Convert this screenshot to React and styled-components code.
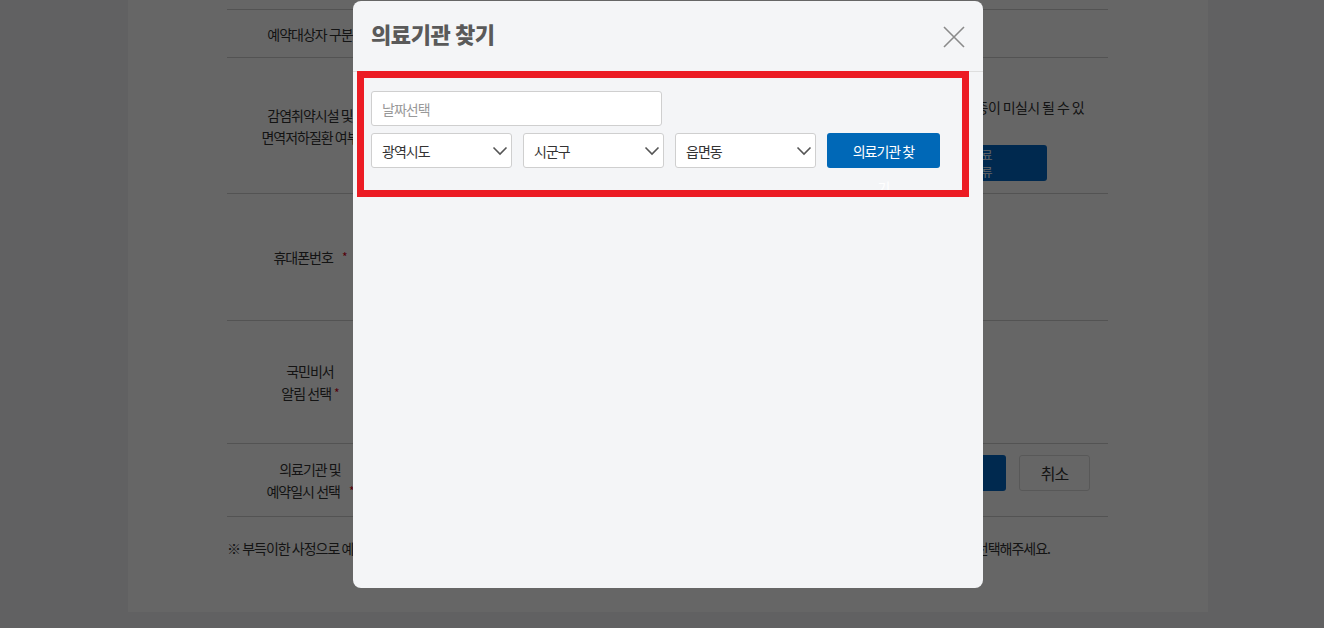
import React from "react";
import styled, { createGlobalStyle } from "styled-components";

const GlobalStyle = createGlobalStyle`
  html, body { margin: 0; padding: 0; }
  body {
    background: #f2f3f5;
    font-family: "Noto Sans CJK KR", "Noto Sans", "Liberation Sans", sans-serif;
    color: #333;
    overflow: hidden;
  }
  * { box-sizing: border-box; }
`;

const Page = styled.div`
  width: 1324px;
  height: 628px;
  background: #f2f3f5;
`;

const Content = styled.main`
  width: 1080px;
  height: 612px;
  margin-left: 128px;
  background: #fff;
  padding: 9px 100px 0 99px;
`;

const Table = styled.div`
  border-bottom: 1px solid #cfcfcf;
`;

const Row = styled.div`
  display: flex;
  height: ${(p) => p.$h}px;
  border-top: 1px solid #cfcfcf;
`;

const Label = styled.div`
  width: 166px;
  flex: none;
  display: flex;
  align-items: center;
  justify-content: center;
  text-align: center;
  font-size: 14px;
  letter-spacing: -1px;
  line-height: 22px;
  color: #333;
`;

const Req = styled.span`
  color: #d0021b;
  font-size: 12px;
  margin-left: ${(p) => (p.$wide ? 9 : 3)}px;
  vertical-align: top;
`;

const Value = styled.div`
  flex: 1;
  display: flex;
  flex-direction: column;
  align-items: flex-end;
  padding: ${(p) => p.$pt || 0}px ${(p) => p.$pr || 24}px 0 20px;
  gap: ${(p) => p.$gap || 0}px;
`;

const Notice = styled.p`
  margin: 0;
  font-size: 14px;
  letter-spacing: -0.6px;
  line-height: 22px;
  text-align: right;
  color: #333;
  white-space: nowrap;
`;

const NavyButton = styled.button`
  width: ${(p) => p.$w}px;
  height: 36px;
  margin-right: ${(p) => p.$mr || 0}px;
  border: 0;
  border-radius: 3px;
  background: #0067c5;
  color: #fff;
  font-family: inherit;
  font-size: 12px;
  letter-spacing: -0.5px;
  line-height: 17px;
  text-align: ${(p) => p.$align || "center"};
  padding: 0 ${(p) => p.$pr || 0}px 0 0;
`;

const ButtonRow = styled.div`
  display: flex;
  gap: 13px;
`;

const GhostButton = styled.button`
  width: 71px;
  height: 36px;
  border: 1px solid #dcdcdc;
  border-radius: 3px;
  background: #fff;
  color: #333;
  font-family: inherit;
  font-size: 16px;
  letter-spacing: -1px;
`;

const Note = styled.p`
  margin: 20px 58px 0 0;
  display: flex;
  justify-content: space-between;
  gap: 6px;
  font-size: 14px;
  letter-spacing: -1px;
  line-height: 22px;
  color: #333;
  white-space: nowrap;
`;

const Overlay = styled.div`
  position: fixed;
  inset: 0;
  background: rgba(0, 0, 0, 0.6);
`;

const Modal = styled.section`
  position: fixed;
  left: 353px;
  top: 1px;
  width: 630px;
  height: 587px;
  background: #f4f5f7;
  border-radius: 8px;
`;

const Header = styled.header`
  height: 71px;
  border-bottom: 1px solid #dedede;
  display: flex;
  align-items: center;
  justify-content: space-between;
  padding: 0 18px 6px 18px;
`;

const Title = styled.h2`
  margin: 0;
  font-size: 22px;
  font-weight: 900;
  letter-spacing: -0.4px;
  color: #5a5a5a;
`;

const CloseButton = styled.button`
  width: 22px;
  height: 22px;
  padding: 0;
  border: 0;
  background: none;
  margin-top: 8px;
  display: flex;
  cursor: pointer;
`;

const Body = styled.div`
  padding: 19px 18px;
  display: flex;
  flex-direction: column;
  gap: 7px;
`;

const DateInput = styled.input`
  width: 291px;
  height: 35px;
  border: 1px solid #cfcfcf;
  border-radius: 3px;
  background: #fff;
  padding: 0 10px;
  font-family: inherit;
  font-size: 14px;
  letter-spacing: -1px;
  color: #333;
  outline: none;
  &::placeholder { color: #999; }
`;

const FilterRow = styled.div`
  display: flex;
  gap: 11px;
`;

const SelectBox = styled.div`
  width: 141px;
  height: 35px;
  border: 1px solid #cfcfcf;
  border-radius: 3px;
  background: #fff;
  display: flex;
  align-items: center;
  justify-content: space-between;
  padding: 0 3px 0 10px;
  font-size: 14px;
  letter-spacing: -1px;
  color: #333;
`;

const SearchButton = styled.button`
  width: 113px;
  height: 35px;
  border: 0;
  border-radius: 3px;
  background: #0068b7;
  color: #fff;
  font-family: inherit;
  font-size: 14px;
  letter-spacing: -1px;
  line-height: 36px;
  padding: 0 20px;
  display: flex;
  align-items: flex-start;
  justify-content: center;
  text-align: center;
  overflow: visible;
`;

const Highlight = styled.div`
  position: absolute;
  left: 4px;
  top: 70px;
  width: 612px;
  height: 126px;
  border: 7px solid #ec1c24;
  pointer-events: none;
`;

const Chevron = () => (
  <svg width="16" height="10" viewBox="0 0 16 10" fill="none">
    <path d="M1.5 1.5 L8 8 L14.5 1.5" stroke="#555" strokeWidth="1.6" />
  </svg>
);

const CloseIcon = () => (
  <svg width="22" height="22" viewBox="0 0 22 22" fill="none">
    <path d="M1 1 L21 21 M21 1 L1 21" stroke="#8a8a8a" strokeWidth="1.6" />
  </svg>
);

export default function App() {
  return (
    <>
      <GlobalStyle />
      <Page>
        <Content>
          <Table>
            <Row $h={48}>
              <Label>예약대상자 구분</Label>
              <Value />
            </Row>
            <Row $h={136}>
              <Label>
                <span>
                  감염취약시설 및
                  <br />
                  면역저하질환 여부
                </span>
              </Label>
              <Value $pt={38} $gap={27}>
                <Notice>해당되는 경우 우선 접종 대상이며, 접종이 미실시 될 수 있</Notice>
                <NavyButton $w={180} $mr={37} $align="right" $pr={55}>
                  증빙자료
                  <br />
                  제출 서류
                </NavyButton>
              </Value>
            </Row>
            <Row $h={127}>
              <Label>
                <span>
                  휴대폰번호<Req $wide>*</Req>
                </span>
              </Label>
              <Value />
            </Row>
            <Row $h={123}>
              <Label>
                <span>
                  국민비서
                  <br />
                  알림 선택<Req>*</Req>
                </span>
              </Label>
              <Value />
            </Row>
            <Row $h={73}>
              <Label>
                <span>
                  의료기관 및
                  <br />
                  예약일시 선택<Req $wide>*</Req>
                </span>
              </Label>
              <Value $pt={11} $pr={18}>
                <ButtonRow>
                  <NavyButton $w={160}>의료기관 선택</NavyButton>
                  <GhostButton>취소</GhostButton>
                </ButtonRow>
              </Value>
            </Row>
          </Table>
          <Note>
            <span>※ 부득이한 사정으로 예약한 날짜에 접종을 받지 못하시는 경우에는</span>
            <span>기존 예약을 취소하신 후 다시 의료기관 및 예약일시를 선택해주세요.</span>
          </Note>
        </Content>
      </Page>
      <Overlay />
      <Modal>
        <Header>
          <Title>의료기관 찾기</Title>
          <CloseButton aria-label="닫기">
            <CloseIcon />
          </CloseButton>
        </Header>
        <Body>
          <DateInput placeholder="날짜선택" />
          <FilterRow>
            <SelectBox>
              광역시도
              <Chevron />
            </SelectBox>
            <SelectBox>
              시군구
              <Chevron />
            </SelectBox>
            <SelectBox>
              읍면동
              <Chevron />
            </SelectBox>
            <SearchButton>의료기관 찾기</SearchButton>
          </FilterRow>
        </Body>
        <Highlight />
      </Modal>
    </>
  );
}
